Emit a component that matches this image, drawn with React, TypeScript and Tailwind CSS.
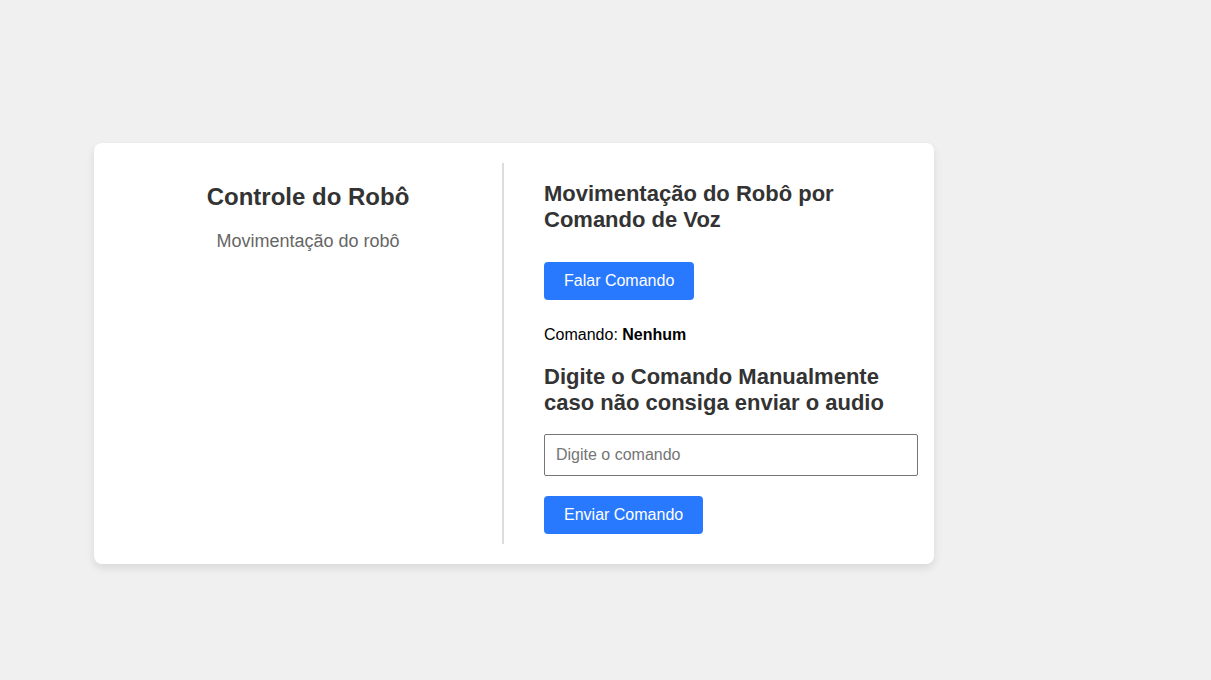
export default function App() {
  return (
    <div className="flex min-h-screen items-center bg-[#f0f0f0] px-4 pt-[27px] font-['Liberation_Sans',Arial,sans-serif] text-base text-black md:pl-[94px]">
      <main className="grid w-full max-w-[840px] rounded-lg bg-white p-5 shadow-[0_4px_8px_rgba(0,0,0,0.1)] md:grid-cols-[97fr_103fr]">
        <section className="min-w-0 py-5 text-center">
          <h1 className="text-2xl leading-7 font-bold text-[#333]">Controle do Robô</h1>
          <p className="mt-5 text-lg leading-5 text-[#666]">Movimentação do robô</p>
        </section>
        <section className="min-w-0 border-[#ddd] pb-[10px] md:border-l-2 md:pl-10">
          <h2 className="mt-[18px] pr-5 text-[22px] leading-[26px] font-bold text-[#333]">
            Movimentação do Robô por Comando de Voz
          </h2>
          <button type="button" className="mt-[29px] block h-[38px] rounded bg-[#2979ff] px-5 text-base leading-[18px] text-white">
            Falar Comando
          </button>
          <p className="mt-[26px] leading-[18px]">
            Comando: <strong>Nenhum</strong>
          </p>
          <form onSubmit={(e) => e.preventDefault()}>
            <h2 className="mt-5 pr-5 text-[22px] leading-[26px] font-bold text-[#333]">
              <label htmlFor="comando">Digite o Comando Manualmente caso não consiga enviar o audio</label>
            </h2>
            <input
              id="comando"
              type="text"
              placeholder="Digite o comando"
              className="mt-[18px] block h-[42px] w-[calc(100%+4px)] rounded-[2px] border border-[#767676] bg-white px-[11px] text-base placeholder:text-[#757575]"
            />
            <button type="submit" className="mt-5 block h-[38px] rounded bg-[#2979ff] px-5 text-base leading-[18px] text-white">
              Enviar Comando
            </button>
          </form>
        </section>
      </main>
    </div>
  );
}
